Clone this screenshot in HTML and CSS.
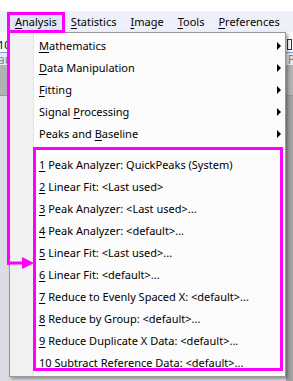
FILE: index.html
```html
<!DOCTYPE html>
<html>
	<head>
		<meta charset="utf-8">
		<title>Analysis menu</title>
		<link rel="stylesheet" href="styles.css">
	</head>
	<body>
		<div class="app">
			<div class="topgap"></div>
			<nav class="menubar">
				<span class="mb-item active"><u>A</u>nalysis</span>
				<span class="mb-item"><u>S</u>tatistics</span>
				<span class="mb-item"><u>I</u>mage</span>
				<span class="mb-item"><u>T</u>ools</span>
				<span class="mb-item"><u>P</u>references</span>
			</nav>
			<div class="workspace">
				<div class="tb tb1">
					<span class="tb-text">10</span>
					<span class="tb-icon"><i class="red"></i><i class="blk"></i></span>
				</div>
				<div class="tb tb2">
					<span class="tb-text">au</span>
					<span class="tb-text">P</span>
				</div>
				<div class="lower">
					<div class="band"></div>
					<div class="pane"></div>
				</div>
			</div>
		</div>

		<div class="menu">
			<div class="item sub"><span><u>M</u>athematics</span></div>
			<div class="item sub"><span><u>D</u>ata Manipulation</span></div>
			<div class="item sub"><span><u>F</u>itting</span></div>
			<div class="item sub"><span>Signal <u>P</u>rocessing</span></div>
			<div class="item sub"><span>Peaks and <u>B</u>aseline</span></div>
			<div class="sep"></div>
			<div class="item"><span><u>1</u> Peak Analyzer: QuickPeaks (System)</span></div>
			<div class="item"><span><u>2</u> Linear Fit: &lt;Last used&gt;</span></div>
			<div class="item"><span><u>3</u> Peak Analyzer: &lt;Last used&gt;...</span></div>
			<div class="item"><span><u>4</u> Peak Analyzer: &lt;default&gt;...</span></div>
			<div class="item"><span><u>5</u> Linear Fit: &lt;Last used&gt;...</span></div>
			<div class="item"><span><u>6</u> Linear Fit: &lt;default&gt;...</span></div>
			<div class="item"><span><u>7</u> Reduce to Evenly Spaced X: &lt;default&gt;...</span></div>
			<div class="item"><span><u>8</u> Reduce by Group: &lt;default&gt;...</span></div>
			<div class="item"><span><u>9</u> Reduce Duplicate X Data: &lt;default&gt;...</span></div>
			<div class="item"><span>1<u>0</u> Subtract Reference Data: &lt;default&gt;...</span></div>
		</div>

		<!-- annotation marks -->
		<div class="mark mark-tab"></div>
		<div class="mark mark-list"></div>
		<div class="mark mark-line"></div>
		<svg class="mark-arrow" width="28" height="12" viewBox="0 0 28 12">
			<path d="M0 4.5h17v3H0z" fill="#ff00ff"/>
			<path d="M15 0l12 6-12 6z" fill="#ff00ff"/>
		</svg>
	</body>
</html>
```

FILE: styles.css
```css
html, body {
	margin: 0;
	height: 100%;
}
body {
	background: #fff;
	font-family: "Noto Sans", "Segoe UI", sans-serif;
	font-size: 11px;
	color: #000;
	overflow: hidden;
	position: relative;
	width: 293px;
	height: 381px;
}
u {
	text-decoration-thickness: 1px;
	text-underline-offset: 2px;
}
.app {
	display: flex;
	flex-direction: column;
	height: 100%;
}
.topgap {
	height: 11px;
}
.menubar {
	display: flex;
	align-items: center;
	height: 21px;
	background: #eef0f9;
	padding-left: 8px;
	white-space: nowrap;
}
.mb-item {
	padding: 0 7px;
	line-height: 20px;
}
.mb-item.active {
	background: #dfe6f3;
	box-shadow: inset 0 -1px #8fb2e2;
}

.workspace {
	flex: 1;
	display: flex;
	flex-direction: column;
}
.tb {
	display: flex;
	justify-content: space-between;
	align-items: center;
	overflow: hidden;
}
.tb1 {
	height: 16px;
	padding-top: 4px;
	background: #fbfbfb;
	border-bottom: 1px solid #6f9fd8;
}
.tb2 {
	height: 12px;
	background: #e9eaee;
	color: #7d8394;
	font-size: 12px;
}
.tb-text {
	margin: 0 -2px;
}
.tb-icon {
	display: flex;
	gap: 1px;
	margin-right: 1px;
}
.tb-icon i {
	width: 3px;
	height: 9px;
	border: 1px solid #333;
}
.tb-icon i.red {
	border-color: #d33;
}
.lower {
	flex: 1;
	display: flex;
	flex-direction: column;
}
.band {
	height: 30px;
	background: #b2b2b2;
	border-bottom: 1px solid #8d95a3;
}
.pane {
	flex: 1;
	background: #dcdde4;
	box-shadow: inset -7px 0 #a3a3a3;
}

.menu {
	position: absolute;
	left: 9px;
	top: 32px;
	width: 275px;
	padding: 2px 0;
	border: 1px solid #979797;
	background: linear-gradient(to right, #f1f1f1 0, #f1f1f1 23px, #e2e3e3 23px, #e2e3e3 24px, #fff 24px, #fff 25px, #fcfcfc 25px);
	box-shadow: 2px 2px 3px rgba(0, 0, 0, .35);
}
.item {
	height: 22px;
	line-height: 22px;
	padding-left: 29px;
	padding-right: 4px;
	display: flex;
	justify-content: space-between;
	align-items: center;
	white-space: nowrap;
}
.item.sub::after {
	content: "";
	border-left: 4px solid #000;
	border-top: 4px solid transparent;
	border-bottom: 4px solid transparent;
}
.sep {
	height: 9px;
	margin-left: 25px;
	background: linear-gradient(#fcfcfc 4px, #e0e0e0 4px, #e0e0e0 5px, #fff 5px);
}

.mark {
	position: absolute;
	border: 3px solid #ff00ff;
	box-sizing: border-box;
}
.mark-tab {
	left: 7px;
	top: 12px;
	width: 58px;
	height: 21px;
}
.mark-list {
	left: 33px;
	top: 147px;
	width: 250px;
	height: 224px;
}
.mark-line {
	left: 7px;
	top: 30px;
	width: 3px;
	height: 235px;
	border-width: 0 0 0 3px;
}
.mark-arrow {
	position: absolute;
	left: 7px;
	top: 257px;
}
```
